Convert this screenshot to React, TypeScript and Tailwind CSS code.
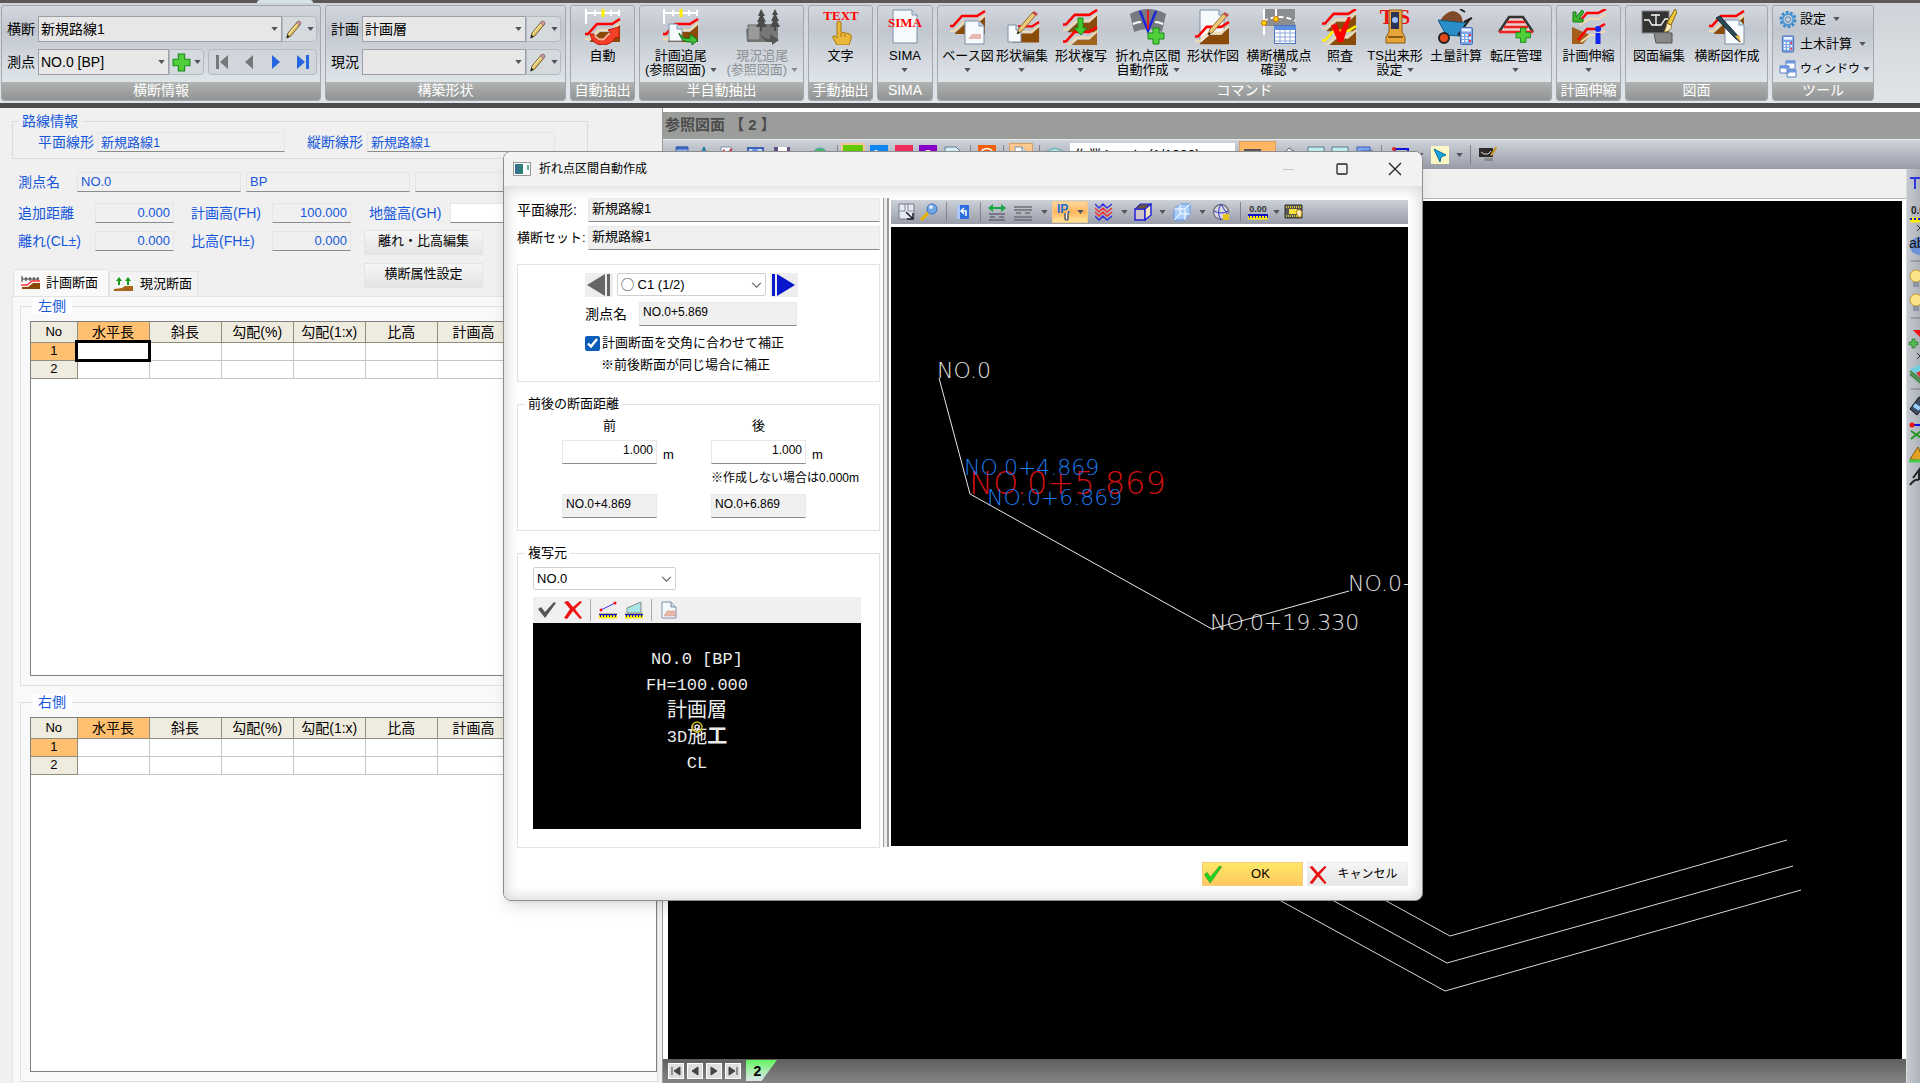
import React, { useState } from 'react';

/* ---------- small drawing parts ---------- */

const Caret = ({ dim = false }: { dim?: boolean }) => (
    <svg viewBox="0 0 8 5" className="h-[4px] w-[7px] shrink-0">
        <path d="M0 0h8L4 5z" fill={dim ? '#8a8e94' : '#50555c'} />
    </svg>
);

const Chevron = () => (
    <svg viewBox="0 0 12 8" className="h-[7px] w-[11px]" fill="none" stroke="#666" strokeWidth="1.3">
        <path d="M1 1l5 5 5-5" />
    </svg>
);

const Pencil = () => (
    <svg viewBox="0 0 18 20" className="h-[19px] w-[17px]">
        <path d="M2 19l1-5L13 2l3 3L6 17z" fill="#e3c368" stroke="#6b5427" strokeWidth="1" />
        <path d="M12 3l2-2q3 0 3 3l-2 2z" fill="#c79aa0" stroke="#7a4d4d" strokeWidth=".7" />
        <path d="M4 14.500L13 4" stroke="#fbe9a8" strokeWidth="1.200" />
        <path d="M1.500 19.500l1-4 2.500 2z" fill="#222" />
    </svg>
);

// cut section of a road: red design line over brown soil
const Section = ({ x = 0, y = 0, w = 36, line = '#f00', soil = '#8a4a08' }: any) => (
    <g transform={`translate(${x} ${y}) scale(${w / 36})`}>
        <path d="M5 22l10-9h12l8-7v17H5z" fill={soil} />
        <path d="M0 20h4l10-9h13l8-7" fill="none" stroke="#f0dcae" strokeWidth="2" />
        <path d="M0 15h3l9-10h15l8-5" fill="none" stroke={line} strokeWidth="2.600" />
    </g>
);

const Page = ({ x = 0, y = 0, w = 16, h = 20 }: any) => (
    <g transform={`translate(${x} ${y})`}>
        <path d={`M0 0h${w - 5}l5 5v${h - 5}h${-w}z`} fill="#f7fafd" stroke="#7d8fa8" />
        <path d={`M${w - 5} 0v5h5`} fill="#cfdcec" stroke="#7d8fa8" />
    </g>
);

const Ruler = () => (
    <g stroke="#fff" strokeWidth="2" fill="none">
        <path d="M1 0v15M1 4h34M10 1v6M26 1v6M34 1v6" />
        <path d="M18 0v8" stroke="#fe0" strokeWidth="3" />
    </g>
);

const Pen = ({ x = 0, y = 0 }: any) => (
    <g transform={`translate(${x} ${y})`}>
        <path d="M1 22l2-6L17 0l3 3L6 19z" fill="#ecc777" stroke="#775520" strokeWidth=".8" />
        <path d="M16 1l2-2 4 3-2 2z" fill="#c54a4a" />
        <path d="M1 22l1-3 2 2z" fill="#222" />
    </g>
);

const Plus = ({ x = 0, y = 0, s = 1 }: any) => (
    <path transform={`translate(${x} ${y}) scale(${s})`} d="M5 0h6v5h5v6h-5v5H5v-5H0V5h5z" fill="#4fcf3a" stroke="#168a18" />
);

const Calc = ({ x = 0, y = 0 }: any) => (
    <g transform={`translate(${x} ${y})`}>
        <rect x=".5" y=".5" width="12" height="17" rx="1" fill="#7ba4e8" stroke="#4b6fb5" />
        <path d="M2 3h9" stroke="#e8f2ff" strokeWidth="3" />
        <path d="M2 8h9M2 11h9M2 14h9" stroke="#fff" strokeWidth="2" strokeDasharray="2 1.500" />
        <path d="M9 8h2M9 14h2" stroke="#e33" strokeWidth="2" />
    </g>
);

const Big = ({ children }: { children?: React.ReactNode }) => (
    <svg viewBox="0 0 36 36" className="h-9 w-9 shrink-0">{children}</svg>
);

const icons: Record<string, React.ReactNode> = {
    auto: (
        <Big>
            <Section y={10} w={36} />
            <Ruler />
            <path d="M5 25q2 11 13 11 9-1 13-8l3 1V18l-11 3 3 3q-4 7-11 7-7-1-6-6z" fill="#f5402a" stroke="#c01808" />
            <path d="M10 27q4 5 9 3l6-6" stroke="#ffb09a" strokeWidth="2" fill="none" />
        </Big>
    ),
    follow: (
        <Big>
            <Section y={10} />
            <Ruler />
            <Page x={6} y={15} w={13} h={17} />
            <path d="M16 24q4 7 11 5v-4l8 6-6 5v-3q-11 1-13-9z" fill="#3fc13a" stroke="#0f6f16" />
        </Big>
    ),
    followOff: (
        <Big>
            <path d="M2 20h9l3-5h20v15l-8 3H3z" fill="#777" />
            <path d="M4 16h12v15H4z" fill="#9b9b9b" stroke="#666" />
            <path d="M17 0l4 7h-2l3 6h-2l3 5h-5v4h-2v-4h-4l3-5h-2l3-6h-2zM31 0l3 6h-2l3 6h-2l3 6h-4v4h-2v-4h-4l3-6h-2l3-6h-2z" fill="#4b4b4b" />
            <path d="M17 25q4 6 9 5v-5l9 6-7 5v-3q-9 1-11-8z" fill="#555" />
        </Big>
    ),
    text: (
        <Big>
            <text x="18" y="11" textAnchor="middle" fontSize="13" fontWeight="bold" fill="#f00" className="font-['Liberation_Serif']">TEXT</text>
            <path d="M14 13q2-2 4 0v10l9 2q2 1 1 5l-2 6H14l-4-7q-1-3 2-2l2 2z" fill="#e9b73a" stroke="#a87913" />
            <path d="M18 24v4M22 25v3" stroke="#a87913" />
        </Big>
    ),
    sima: (
        <Big>
            <Page x={6} y={1} w={24} h={33} />
            <text x="18" y="18" textAnchor="middle" fontSize="13" fontWeight="bold" fill="#f00" className="font-['Liberation_Serif']">SIMA</text>
        </Big>
    ),
    base: (
        <Big>
            <Section y={2} />
            <Page x={15} y={12} w={19} h={23} />
            <path d="M18 30l4-5h9v5z" fill="#e8b9b0" />
        </Big>
    ),
    edit: (
        <Big>
            <Section x={4} y={13} w={32} />
            <Page x={4} y={16} w={13} h={17} />
            <Pen x={12} y={3} />
        </Big>
    ),
    copy: (
        <Big>
            <Section y={1} w={35} />
            <Section y={18} w={35} soil="#a0621c" />
            <path d="M15 9h5v10h4l-6 7-7-7h4z" fill="#46c832" stroke="#1a8a16" />
        </Big>
    ),
    bend: (
        <Big>
            <path d="M0 5q18-10 36 0l-4 18q-14-6-28 0z" fill="#777b81" />
            <path d="M3 15q4-2 8-2M33 15q-4-2-8-2" stroke="#fff" strokeWidth="2" />
            <path d="M10 2l8 20 8-20" fill="none" stroke="#1a23d8" strokeWidth="2.500" />
            <path d="M18 1v19" stroke="#e02020" strokeWidth="2" />
            <Plus x={18} y={19} />
        </Big>
    ),
    draw: (
        <Big>
            <Page x={5} y={1} w={24} h={33} />
            <Section y={13} w={35} />
            <Pen x={12} y={4} />
        </Big>
    ),
    check: (
        <Big>
            <path d="M2 0h32v17H2z" fill="#8b8d8e" />
            <path d="M2 12q18-8 32 0" stroke="#fff" fill="none" strokeDasharray="5 3" strokeWidth="2" />
            <path d="M3 0v26M15 0v12" stroke="#fff" strokeWidth="2" />
            <circle cx="3" cy="14" r="2.500" fill="#fd0" stroke="#d60" />
            <circle cx="15" cy="10" r="2.500" fill="#fd0" stroke="#d60" />
            <rect x="13.500" y="16.500" width="21" height="18" fill="#fff" stroke="#4a73bb" />
            <path d="M13 19h22" stroke="#5f8fe0" strokeWidth="4" />
            <path d="M14 24h20M14 28h20M14 32h20M19 21v14M24 21v14M29 21v14" stroke="#8faadb" />
        </Big>
    ),
    verify: (
        <Big>
            <Section y={0} w={35} />
            <Section y={17} w={35} line="#fe0" />
            <path d="M9 16l6-1 3 8L26 8l3 0-8 25h-5z" fill="#f00" />
        </Big>
    ),
    ts: (
        <Big>
            <text x="18" y="15" textAnchor="middle" fontSize="21" fontWeight="bold" fill="#e11" className="font-['Liberation_Serif']">T S</text>
            <path d="M12 1h13v22l3 5v6H9v-6l3-5z" fill="#e6a43a" stroke="#8a5a12" />
            <path d="M14 3h8v17h-8z" fill="#2a3358" />
            <circle cx="18" cy="11" r="3" fill="#9fc0ff" />
            <path d="M11 28h15" stroke="#8a5a12" strokeWidth="2" />
        </Big>
    ),
    barrow: (
        <Big>
            <path d="M2 12q5-9 13-10 9 1 10 12z" fill="#80492a" />
            <path d="M0 11l28 3-7 13-13-1z" fill="#2a8fc8" stroke="#125a86" />
            <path d="M26 13l8-4M27 3l-5-3M22 26l3 7M20 26L32 10" stroke="#222" strokeWidth="2" fill="none" />
            <circle cx="6" cy="29" r="5" fill="#e4491c" stroke="#222" strokeWidth="2" />
            <Calc x={22} y={18} />
        </Big>
    ),
    roll: (
        <Big>
            <path d="M11 8h14l10 15H1z" fill="#e8cdcb" />
            <path d="M1 23L11 8h14l10 15" fill="none" stroke="#333" strokeWidth="2.500" />
            <path d="M9 13h18M6 18h24M1 23h34" stroke="#e22" strokeWidth="2.500" />
            <Plus x={18} y={19} s={0.9} />
        </Big>
    ),
    stretch: (
        <Big>
            <path d="M1 18l18 8-7 9H1z" fill="#a35f1a" />
            <path d="M9 16l9-6h9l8-5M10 33l9-7h6l9-4" stroke="#f0dcae" strokeWidth="2" fill="none" />
            <path d="M9 12l7-8h11l8-4M7 31l9-11h9l9-5" stroke="#f00" strokeWidth="2.500" fill="none" />
            <path d="M11 1L5 8V3H2v10h10v-3H8l5-7z" fill="#3bb72f" stroke="#167a14" />
            <path d="M27 24v11" stroke="#1125f0" strokeWidth="5" />
            <circle cx="27" cy="20" r="3" fill="#1125f0" />
        </Big>
    ),
    figure: (
        <Big>
            <path d="M13 24h18v10H15z" fill="#888" stroke="#555" />
            <rect x="1" y="2" width="27" height="22" fill="#333" stroke="#8a8a8a" />
            <path d="M3 11h5l3 5h9l4-6h3M15 6v10M10 6h9" stroke="#fff" fill="none" strokeWidth="1.300" />
            <path d="M34 0l2 3-6 13-4-2z" fill="#edc93c" stroke="#8a6712" />
            <path d="M26 14l5 3q-2 6-8 6 2-3 3-9z" fill="#fdeec0" stroke="#97762a" />
        </Big>
    ),
    xdraw: (
        <Big>
            <Section y={2} />
            <Page x={16} y={11} w={19} h={24} />
            <path d="M7 9l4-2 18 20 2 6-5-4z" fill="#2b4a58" stroke="#10222b" />
            <path d="M26 27l6 7-2-8z" fill="#e3b74a" />
        </Big>
    ),
};

/* ---------- ribbon ---------- */

const Group = ({ title, className, children }: { title: string; className: string; children?: React.ReactNode }) => (
    <section className={`flex h-[96px] shrink-0 flex-col overflow-hidden rounded-[3px] border border-[#a3a8ae] bg-linear-to-b from-[#d3d7de] via-[#c2c7cf] via-25% to-[#e9f0f2] ${className}`}>
        <div className="flex min-h-0 flex-1">{children}</div>
        <h2 className="h-[18px] bg-linear-to-b from-[#b1b3b2] to-[#929493] text-center text-sm leading-[17px] text-white">{title}</h2>
    </section>
);

const BigButton = ({ icon, lines, caret, off, className }: { icon: string; lines: string[]; caret?: boolean; off?: boolean; className: string }) => (
    <button type="button" disabled={off} className={`flex shrink-0 flex-col items-center pt-[3px] ${className} ${off ? 'text-[#8b8f94]' : 'text-black'}`}>
        {icons[icon]}
        <span className="mt-1 flex flex-col items-center text-[13px] leading-[14px] whitespace-nowrap">
            <span>{lines[0]}</span>
            <span className="flex h-[14px] items-center gap-1">{lines[1]}{caret && <Caret dim={off} />}</span>
        </span>
    </button>
);

const RibbonSelect = ({ label, value, className }: { label: string; value: string; className: string }) => (
    <label className="flex items-center text-sm">
        <span className="w-[31px]">{label}</span>
        <span className={`relative block ${className}`}>
            <select className="h-[26px] w-full appearance-none border border-[#9da0a4] bg-[#e7e7e7] pl-[2px] text-sm" defaultValue={value}>
                <option>{value}</option>
            </select>
            <span className="pointer-events-none absolute top-[11px] right-1"><Caret /></span>
        </span>
    </label>
);

const SmallSplit = ({ children, label }: { children?: React.ReactNode; label: string }) => (
    <button type="button" aria-label={label} className="flex h-[26px] w-[35px] items-center justify-between rounded-r-sm border border-[#b4bac0] bg-[#d4dade] px-[2px]">
        {children}
        <Caret />
    </button>
);

const commands: [string, string[], boolean, string][] = [
    ['base', ['ベース図'], true, 'w-[52px]'],
    ['edit', ['形状編集'], true, 'w-[56px]'],
    ['copy', ['形状複写'], true, 'w-[62px]'],
    ['bend', ['折れ点区間', '自動作成'], true, 'w-[72px]'],
    ['draw', ['形状作図'], false, 'w-[58px]'],
    ['check', ['横断構成点', '確認'], true, 'w-[74px]'],
    ['verify', ['照査'], true, 'w-[48px]'],
    ['ts', ['TS出来形', '設定'], true, 'w-[62px]'],
    ['barrow', ['土量計算'], false, 'w-[60px]'],
    ['roll', ['転圧管理'], true, 'w-[60px]'],
];

const Ribbon = () => (
    <header className="h-[108px] shrink-0 border-b-[5px] border-[#4b4b4d] bg-linear-to-b from-[#cfd3d9] to-[#dfe5e8]">
        <div className="h-[3px] bg-[#5c5859]">
            <div className="ml-[257px] h-[3px] w-[56px] rounded-t-full bg-[#d5e2e6]"></div>
        </div>
        <div className="flex gap-1 pt-[2px] pl-px">
            <Group title="横断情報" className="w-[320px]">
                <div className="flex flex-col gap-[7px] pt-[10px] pl-[5px]">
                    <div className="flex">
                        <RibbonSelect label="横断" value="新規路線1" className="w-[244px]" />
                        <SmallSplit label="横断編集"><Pencil /></SmallSplit>
                    </div>
                    <div className="flex">
                        <RibbonSelect label="測点" value="NO.0 [BP]" className="w-[131px]" />
                        <SmallSplit label="測点追加">
                            <svg viewBox="-1 -1 18 18" className="h-[19px] w-[19px]"><Plus /></svg>
                        </SmallSplit>
                        <div className="ml-1 flex h-[26px] w-[109px] items-center justify-around rounded-sm border border-[#b4bac0] bg-[#d0d6db]">
                            <button type="button" aria-label="先頭"><svg viewBox="0 0 14 14" className="h-[14px] w-[14px]" fill="#75777b"><path d="M1 0h3v14H1zM13 0v14L5 7z" /></svg></button>
                            <button type="button" aria-label="前へ"><svg viewBox="0 0 14 14" className="h-[14px] w-[14px]" fill="#75777b"><path d="M11 0v14L3 7z" /></svg></button>
                            <button type="button" aria-label="次へ"><svg viewBox="0 0 14 14" className="h-[14px] w-[14px]" fill="#2566e0"><path d="M3 0v14l8-7z" /></svg></button>
                            <button type="button" aria-label="最後"><svg viewBox="0 0 14 14" className="h-[14px] w-[14px]" fill="#2566e0"><path d="M10 0h3v14h-3zM1 0v14l8-7z" /></svg></button>
                        </div>
                    </div>
                </div>
            </Group>
            <Group title="構築形状" className="w-[241px]">
                <div className="flex flex-col gap-[7px] pt-[10px] pl-[5px]">
                    <div className="flex">
                        <RibbonSelect label="計画" value="計画層" className="w-[164px]" />
                        <SmallSplit label="計画編集"><Pencil /></SmallSplit>
                    </div>
                    <div className="flex">
                        <RibbonSelect label="現況" value="" className="w-[164px]" />
                        <SmallSplit label="現況編集"><Pencil /></SmallSplit>
                    </div>
                </div>
            </Group>
            <Group title="自動抽出" className="w-[65px]">
                <BigButton icon="auto" lines={['自動']} className="w-full" />
            </Group>
            <Group title="半自動抽出" className="w-[165px]">
                <BigButton icon="follow" lines={['計画追尾', '(参照図面)']} caret className="w-1/2" />
                <BigButton icon="followOff" lines={['現況追尾', '(参照図面)']} caret off className="w-1/2" />
            </Group>
            <Group title="手動抽出" className="w-[65px]">
                <BigButton icon="text" lines={['文字']} className="w-full" />
            </Group>
            <Group title="SIMA" className="w-[56px]">
                <BigButton icon="sima" lines={['SIMA']} caret className="w-full" />
            </Group>
            <Group title="コマンド" className="w-[615px]">
                <div className="flex pl-1">
                    {commands.map(([icon, lines, caret, w]) => (
                        <BigButton key={icon} icon={icon} lines={lines} caret={caret} className={w} />
                    ))}
                </div>
            </Group>
            <Group title="計画伸縮" className="w-[65px]">
                <BigButton icon="stretch" lines={['計画伸縮']} caret className="w-full" />
            </Group>
            <Group title="図面" className="w-[143px]">
                <BigButton icon="figure" lines={['図面編集']} className="w-[66px]" />
                <BigButton icon="xdraw" lines={['横断図作成']} className="w-[70px]" />
            </Group>
            <Group title="ツール" className="w-[102px]">
                <div className="flex flex-col gap-[5px] pt-[3px] pl-[6px] text-[13px] leading-5 whitespace-nowrap">
                    <button type="button" className="flex items-center gap-[3px]">
                        <svg viewBox="0 0 20 20" className="h-[19px] w-[18px] shrink-0" fill="none">
                            <circle cx="10" cy="10" r="8" stroke="#3c86c8" strokeWidth="3" strokeDasharray="3 2" />
                            <circle cx="10" cy="10" r="6" stroke="#4a97d8" strokeWidth="2" />
                            <circle cx="10" cy="10" r="3" stroke="#3c86c8" />
                        </svg>
                        設定<span className="pl-1"><Caret /></span>
                    </button>
                    <button type="button" className="flex items-center gap-[3px]">
                        <svg viewBox="-3 0 19 18" className="h-[18px] w-[18px] shrink-0"><Calc /></svg>
                        土木計算<span className="pl-1"><Caret /></span>
                    </button>
                    <button type="button" className="flex items-center gap-[3px] text-xs leading-5">
                        <svg viewBox="0 0 18 18" className="h-[18px] w-[18px] shrink-0" fill="#fff" stroke="#5b7fc0">
                            <path d="M7 1h9v8H7zM1 6h9v7H1zM8 10h9v7H8z" />
                            <path d="M7 2h9M1 7h9M8 11h9" strokeWidth="3" stroke="#6d98e0" />
                        </svg>
                        ウィンドウ<Caret />
                    </button>
                </div>
            </Group>
        </div>
    </header>
);

/* ---------- left input panel ---------- */

const Field = ({ label, value, labelClass, inputClass, right, white }: any) => (
    <label className="flex items-center">
        {label && <span className={`shrink-0 leading-[18px] whitespace-nowrap ${labelClass}`}>{label}</span>}
        <input
            readOnly={!white}
            aria-label={label ? undefined : '測点'}
            defaultValue={value}
            className={`h-5 border border-[#e6e6e6] border-b-[#8c8c8c] px-[3px] pb-[2px] text-[13px] outline-none ${right ? 'text-right' : ''} ${white ? 'bg-white' : 'bg-[#f0f0f0]'} ${inputClass}`}
        />
    </label>
);

const columns = ['水平長', '斜長', '勾配(%)', '勾配(1:x)', '比高', '計画高'];

const SideTable = ({ title, active }: { title: string; active?: boolean }) => (
    <fieldset className="flex min-h-0 min-w-0 flex-1 flex-col border border-[#dfdfdf] pb-[9px] pl-[9px]">
        <legend className="ml-[2px] bg-white px-[6px] text-sm leading-4 text-[#1557dc]">{title}</legend>
        <div className="mt-[7px] min-h-0 flex-1 overflow-hidden border border-[#808080] bg-white">
            <table className="w-[479px] table-fixed border-collapse text-center text-sm leading-4">
                <thead>
                    <tr className="h-5">
                        <th className="w-[46px] border-r border-b border-[#8f8d7c] bg-[#efebde] text-[13px] font-normal">No</th>
                        {columns.map((c, i) => (
                            <th key={c} className={`border-r border-b border-[#8f8d7c] font-normal whitespace-nowrap ${i === 0 ? 'bg-[#ffc072]' : 'bg-[#efebde]'}`}>{c}</th>
                        ))}
                    </tr>
                </thead>
                <tbody>
                    {[1, 2].map((n) => (
                        <tr key={n} className="h-[18px]">
                            <th className={`border-r border-b border-[#8f8d7c] text-[13px] font-normal ${n === 1 ? 'bg-[#ffc072]' : 'bg-[#efebde]'}`}>{n}</th>
                            {columns.map((c, i) => (
                                <td key={c} className={`border-r border-b border-[#c6c6c6] ${active && n === 1 && i === 0 ? 'outline-3 -outline-offset-1 outline-black' : ''}`}></td>
                            ))}
                        </tr>
                    ))}
                </tbody>
            </table>
        </div>
    </fieldset>
);

const InputPanel = () => (
    <aside className="flex w-[662px] shrink-0 flex-col bg-[#f0f0f0] pt-[5px] text-sm text-[#1557dc]">
        <fieldset className="ml-3 h-[46px] w-[576px] border border-[#dcdcdc]">
            <legend className="ml-[5px] px-1 leading-4">路線情報</legend>
            <div className="flex gap-[22px] pt-[3px] pl-[25px]">
                <Field label="平面線形" value="新規路線1" labelClass="w-[59px]" inputClass="w-[188px]" />
                <Field label="縦断線形" value="新規路線1" labelClass="w-[60px]" inputClass="w-[188px]" />
            </div>
        </fieldset>
        <div className="mt-[13px] flex gap-[5px] pl-[18px]">
            <Field label="測点名" value="NO.0" labelClass="w-[59px]" inputClass="w-[164px]" />
            <Field value="BP" inputClass="w-[164px]" />
            <Field value="" inputClass="w-[164px]" />
        </div>
        <div className="mt-[11px] flex h-[93px] shrink-0 pl-[13px]">
            <div className="flex w-[351px] flex-col">
                <div className="flex gap-[17px] pl-[5px]">
                    <Field label="追加距離" value="0.000" right labelClass="w-[77px]" inputClass="w-[79px]" />
                    <Field label="計画高(FH)" value="100.000" right labelClass="w-[81px]" inputClass="w-[79px]" />
                </div>
                <div className="mt-2 flex gap-[17px] pl-[5px]">
                    <Field label="離れ(CL±)" value="0.000" right labelClass="w-[77px]" inputClass="w-[79px]" />
                    <Field label="比高(FH±)" value="0.000" right labelClass="w-[81px]" inputClass="w-[79px]" />
                </div>
                <div className="mt-auto flex items-end text-black" role="tablist">
                    <button type="button" role="tab" aria-selected="true" className="flex h-[27px] w-[96px] items-center gap-[5px] border border-b-0 border-[#e4e4e4] bg-[#f9f9f9] pl-[7px] text-[13px] whitespace-nowrap">
                        <svg viewBox="0 0 20 14" className="h-[14px] w-5 shrink-0">
                            <path d="M1 0v6M1 3h17M5 1v4M9 1v4M13 1v4M17 1v4" stroke="#333" />
                            <path d="M1 11h6l5-4h7v6H1z" fill="#8a4a08" />
                            <path d="M0 9h6l5-4h8" stroke="#f33" strokeWidth="1.500" fill="none" />
                        </svg>
                        計画断面
                    </button>
                    <button type="button" role="tab" aria-selected="false" className="flex h-[25px] w-[89px] items-center gap-[6px] border border-b-0 border-[#e4e4e4] bg-[#f3f3f3] pl-1 text-[13px] whitespace-nowrap">
                        <svg viewBox="0 0 20 14" className="h-[14px] w-5 shrink-0">
                            <path d="M5 0l3 4H6v4H4V4H2zM14 0l3 4h-2v4h-2V4h-2z" fill="#1a9a1a" />
                            <path d="M0 12l8-1 3-2h8v5H0z" fill="#a8661c" />
                        </svg>
                        現況断面
                    </button>
                </div>
            </div>
            <div className="flex flex-col">
                <div className="pl-[5px]">
                    <Field label="地盤高(GH)" value="" white labelClass="w-[81px]" inputClass="w-[79px]" />
                </div>
                <button type="button" className="mt-[7px] h-[25px] w-[119px] border border-[#e4e4e4] bg-linear-to-b from-[#f6f6f6] to-[#e4e4e4] pb-[2px] text-[13px] whitespace-nowrap text-black">離れ・比高編集</button>
                <button type="button" className="mt-2 h-[25px] w-[119px] border border-[#e4e4e4] bg-linear-to-b from-[#f6f6f6] to-[#e4e4e4] pb-[2px] text-[13px] text-black">横断属性設定</button>
            </div>
        </div>
        <div className="mr-1 ml-3 flex min-h-0 flex-1 flex-col gap-2 border-t border-l border-[#e4e4e4] bg-[#f9f9f9] pt-px pb-px pl-[7px] text-black">
            <SideTable title="左側" active />
            <SideTable title="右側" />
        </div>
    </aside>
);

/* ---------- reference drawing pane ---------- */

const Cell = ({ w, children }: { w: string; children?: React.ReactNode }) => (
    <span className={`flex h-full shrink-0 items-center justify-center ${w}`}>{children}</span>
);

const Sep = () => <span className="h-5 w-px bg-[#7f848d]"></span>;

const Mini = ({ children }: { children?: React.ReactNode }) => (
    <svg viewBox="0 0 18 18" className="h-[18px] w-[18px] shrink-0">{children}</svg>
);

const DrawingToolbar = () => (
    <div className="flex h-[30px] shrink-0 items-center border-t border-[#e8e8e8] bg-linear-to-b from-[#cfd3da] to-[#979ca8] pl-1">
        <Cell w="w-[26px]"><Mini><path d="M5 1h12v12H5z" fill="#8db4f5" stroke="#3f63b5" /><path d="M5 2h12" stroke="#3f63b5" strokeWidth="3" /></Mini></Cell>
        <Cell w="w-[22px]"><Mini><path d="M2 16L9 1l6 15z" fill="#27a5d8" stroke="#15668c" /></Mini></Cell>
        <Cell w="w-[28px]"><Mini><Page x={1} y={1} w={15} h={15} /><path d="M3 4l8 8M12 3l-8 8" stroke="#c33" strokeWidth="2" /></Mini></Cell>
        <Cell w="w-[24px]"><Mini><path d="M2 2h15v12H2z" fill="#c5dafc" stroke="#3f63b5" strokeWidth="2" /><circle cx="9" cy="7" r="4" fill="#5e90e6" /></Mini></Cell>
        <Cell w="w-[30px]"><Mini><path d="M1 1h16v14H1z" fill="#655086" /><path d="M5 1h9v6H5z" fill="#fff" /></Mini></Cell>
        <Cell w="w-[10px]"></Cell>
        <Cell w="w-[26px]"><Mini><circle cx="9" cy="9" r="7" fill="#4ab86b" stroke="#5b9fc0" /></Mini></Cell>
        <Cell w="w-[8px]"><Sep /></Cell>
        <Cell w="w-[24px]"><span className="h-6 w-6 border-2 border-[#f5c596] bg-[#62c800]"></span></Cell>
        <Cell w="w-[28px]"><span className="h-5 w-[18px] bg-[#1086f2] text-center text-xs leading-5 font-bold text-white">fg</span></Cell>
        <Cell w="w-[22px]"><span className="h-5 w-[18px] bg-[#f02c5c] text-center text-xs leading-5 text-white">⋈</span></Cell>
        <Cell w="w-[26px]"><span className="h-5 w-[18px] bg-[#8800c8] text-center text-xs leading-5 font-bold text-white">O</span></Cell>
        <Cell w="w-[24px]"><Mini><path d="M1 1h11l5 5v9H1z" fill="#d4ecf4" stroke="#607890" /></Mini></Cell>
        <Cell w="w-[10px]"><Sep /></Cell>
        <Cell w="w-[24px]"><span className="h-5 w-[18px] bg-[#f45f0a] text-center text-xs leading-5 font-bold text-white">⌒</span></Cell>
        <Cell w="w-[8px]"><Sep /></Cell>
        <Cell w="w-[28px]"><span className="flex h-6 w-6 items-center justify-center border border-[#d99f60] bg-[#ffc98e]"><Mini><Page x={3} y={1} w={12} h={15} /></Mini></span></Cell>
        <Cell w="w-[8px]"><Sep /></Cell>
        <Cell w="w-[24px]"><Mini><path d="M1 5l8-3 8 3-8 4z" fill="#a8e2e8" stroke="#5aa" /><path d="M1 9l8 4 8-4" stroke="#5aa" fill="none" /></Mini></Cell>
        <select aria-label="シート" className="ml-[3px] h-6 w-[165px] appearance-none bg-white px-1 text-sm" defaultValue="s">
            <option value="s">作業シート (1/1000)</option>
        </select>
        <Cell w="ml-1 w-[37px]"><span className="flex h-7 w-full items-center gap-1 border border-[#d99f60] bg-[#ffb663] pl-1"><Mini><path d="M1 4h15v11H1z" fill="#ffefb0" stroke="#555" strokeWidth="2" /></Mini><Caret /></span></Cell>
        <Cell w="w-[27px]"><Mini><path d="M1 9l7-7 9 6-7 8z" fill="#e8ecf0" stroke="#667" /></Mini></Cell>
        <Cell w="w-[25px]"><Mini><path d="M1 1h16v14H1z" fill="#b9ecea" stroke="#678" /></Mini></Cell>
        <Cell w="w-[24px]"><Mini><path d="M1 1h16v14H1z" fill="#b9ecea" stroke="#678" /><path d="M9 6h8v9H9z" fill="#fff" /></Mini></Cell>
        <Cell w="w-[25px]"><Mini><path d="M1 1h13v9H1zM5 5h12v9H5z" fill="#7da4ee" stroke="#3b5dac" /></Mini></Cell>
        <Cell w="w-[8px]"><Sep /></Cell>
        <Cell w="w-[30px]"><Mini><path d="M4 14V3h13v11" fill="none" stroke="#11d" strokeWidth="2" /><circle cx="3" cy="3" r="2" fill="#d22" /></Mini></Cell>
        <Cell w="w-[10px]"><Caret /></Cell>
        <Cell w="w-[29px]"><span className="h-[18px] w-[18px] bg-[#fbf7c4]"><Mini><path d="M3 3l12 6-5 2-1 5z" fill="#18a4dc" stroke="#0e6f99" /></Mini></span></Cell>
        <Cell w="w-[10px]"><Caret /></Cell>
        <Cell w="w-[12px]"><Sep /></Cell>
        <Cell w="w-[24px]">
            <Mini>
                <path d="M0 2h14v9H0z" fill="#2c2a27" /><path d="M2 6l3 2h4l3-3" stroke="#ddd" fill="none" />
                <path d="M17 0l1 2-5 8-2-1z" fill="#c9962c" /><path d="M5 12h9v3H6z" fill="#888" />
            </Mini>
        </Cell>
    </div>
);

const SideStrip = () => (
    <div className="w-[14px] shrink-0 overflow-hidden border-l border-[#d8dade] bg-linear-to-r from-[#c6c9cf] to-[#aeb3bb]">
        <svg width="36" height="330" viewBox="0 0 36 330">
            <path d="M3 9h14M8 9v11" stroke="#2b35e0" strokeWidth="2" fill="none" />
            <text x="4" y="45" fontSize="10" fontWeight="bold" fill="#222">0.00</text>
            <path d="M3 51h18" stroke="#fe0" strokeWidth="5" /><path d="M3 50h18" stroke="#11c" strokeWidth="2" strokeDasharray="2 2" />
            <circle cx="12" cy="77" r="9" fill="#6b93d8" /><text x="2" y="79" fontSize="14" fill="#111">ab</text>
            <path d="M4 92h14M4 149h14M4 220h14" stroke="#777b82" />
            {[102, 126].map((y) => (
                <g key={y}>
                    <circle cx="9" cy={y + 5} r="6" fill="#fbe38a" stroke="#c29a2a" />
                    <path d="M6 11h6v5H6z" transform={`translate(0 ${y})`} fill="#8a93a0" />
                </g>
            ))}
            <path d="M10 56l3 3-3 3M10 184l3 3-3 3" stroke="#333" fill="none" />
            <path d="M6 161h14v14z" fill="#e11" /><path d="M5 170h3v3h3v3H8v3H5v-3H2v-3h3z" fill="#5b5" stroke="#272" strokeWidth=".7" />
            <path d="M3 200l12-5v16z" fill="#6fd0e0" /><path d="M3 202l12 10M3 205l12 10" stroke="#484" strokeWidth="2" /><path d="M9 204l6-3v10z" fill="#d33" />
            <path d="M3 240l9-12 8 5-10 13z" fill="#3c4c66" stroke="#111" /><path d="M7 236l6 4" stroke="#9cf" strokeWidth="4" />
            <path d="M5 256h14" stroke="#11d" strokeWidth="2" /><circle cx="5" cy="256" r="2.500" fill="#e11" /><path d="M4 262l12 8M4 270l10-8" stroke="#292" strokeWidth="2" />
            <path d="M3 290l8-12 6 14z" fill="#e0a020" stroke="#8a5a10" /><path d="M2 292h12" stroke="#4c4" strokeWidth="3" />
            <path d="M3 316q4-6 9-5M6 309l6-8v10" stroke="#222" strokeWidth="2" fill="none" />
        </svg>
    </div>
);

const DrawingPane = () => (
    <main className="flex min-w-0 flex-1 flex-col border-l border-[#9b9b9b] bg-white pt-1">
        <h2 className="h-[27px] shrink-0 bg-[#9b9d9b] pl-[2px] text-[15px] leading-[26px] font-bold text-[#4c4c4c]">参照図面 【 2 】</h2>
        <DrawingToolbar />
        <div className="flex min-h-0 flex-1">
            <div className="flex min-w-0 flex-1 flex-col">
                <div className="h-[30px] shrink-0 border-b border-[#b5b5b5] bg-[#f0f0f0]"></div>
                <div className="mt-[2px] mr-1 ml-[5px] min-h-0 flex-1 bg-black">
                    <svg width="100%" height="100%" fill="none" stroke="#d8d8d8" strokeWidth="1">
                        <path d="M500 580l282 155 337-96M500 609l279 153 346-97M500 638l277 152 356-101" />
                    </svg>
                </div>
                <div className="flex h-6 shrink-0 items-start gap-[3px] bg-linear-to-b from-[#5f5f5f] to-[#858585] pt-[3px] pl-[5px]">
                    {['M3 3v8M11 3v8L5 7z', 'M10 3v8L4 7z', 'M4 3v8l6-4z', 'M11 3v8M3 3v8l6-4z'].map((d, i) => (
                        <button key={d} type="button" aria-label={`シート移動${i + 1}`} className="mt-px h-4 w-4 border border-[#fdfdfd] bg-[#dedede]">
                            <svg viewBox="0 0 14 14" className="h-[14px] w-[14px]" fill="#444" stroke="#444"><path d={d} /></svg>
                        </button>
                    ))}
                    <button type="button" className="-mt-[2px] ml-[2px] h-[21px] w-[31px] bg-linear-to-b from-[#5df25a] to-[#dce4ea] pr-2 text-sm font-bold text-black [clip-path:polygon(0_0,100%_0,50%_100%,0_100%)]">2</button>
                </div>
            </div>
            <SideStrip />
        </div>
    </main>
);

/* ---------- dialog ---------- */

const BoxSelect = ({ value, label, className }: { value: string; label: string; className: string }) => (
    <span className={`relative block ${className}`}>
        <select aria-label={label} defaultValue={value} className="h-[23px] w-full appearance-none rounded-[2px] border border-[#d0d0d0] bg-white pl-[3px] text-[13px] leading-5">
            <option>{value}</option>
        </select>
        <span className="pointer-events-none absolute top-[9px] right-1"><Chevron /></span>
    </span>
);

const field = 'h-6 border border-[#e8e8e8] border-b-[#8c8c8c] px-[3px] pb-[5px] outline-none';

const ViewToolbar = () => (
    <div className="flex h-6 items-center gap-1 bg-linear-to-b from-[#cdd1d8] to-[#989dA9] pl-[7px]">
        <Mini><path d="M1 1h15v15H1z" fill="#e4ebf4" stroke="#778" /><path d="M7 1v7H1M10 1v7h6" stroke="#889" fill="none" /><path d="M15 10v6H9M15 16L8 9" stroke="#222" strokeWidth="1.500" fill="none" /></Mini>
        <Mini><path d="M1 17l7-7" stroke="#e9b400" strokeWidth="3" /><circle cx="12" cy="6" r="5" fill="#6fa6e6" stroke="#3c6db5" /><circle cx="11" cy="4" r="2" fill="#d8eaff" /></Mini>
        <Cell w="w-2"><Sep /></Cell>
        <Mini><path d="M3 2h12v14H3z" fill="#2d6fe0" /><path d="M6 2v14H3V2z" fill="#a9c8fa" /><path d="M12 13V8H8M10 5L7 8l3 3" stroke="#fff" strokeWidth="1.500" fill="none" /></Mini>
        <Cell w="w-2"><Sep /></Cell>
        <Mini><path d="M0 5l5-4v3h8V1l5 4-5 4V6H5v3z" fill="#18a848" /><path d="M1 11h16M1 17h16M2 14h5M11 14h5" stroke="#667" strokeWidth="1.500" /></Mini>
        <Cell w="w-[26px]"><Mini><path d="M0 4h18M0 14h18M0 7h18M0 17h18M2 10h5M11 10h5" stroke="#6d7178" strokeWidth="1.500" /></Mini></Cell>
        <Cell w="w-2"><Caret /></Cell>
        <button type="button" className="flex h-[22px] w-9 items-center justify-between border border-[#f0c888] bg-linear-to-b from-[#ffd9a0] via-[#ffb45a] to-[#ffe79a] px-[3px]">
            <svg viewBox="0 0 20 18" className="h-[18px] w-5"><text x="1" y="10" fontSize="12" fontWeight="bold" fill="#1670d8">IP.</text><path d="M9 10v6q2 2 3 0v-6" stroke="#777" strokeWidth="2" fill="#fff" /></svg>
            <Caret />
        </button>
        <Cell w="w-6">
            <Mini>
                <g fill="none" strokeWidth="1.500"><path d="M0 1l4 4 4-4 4 4 5-4" stroke="#33d" /><path d="M0 5l4 4 4-4 4 4 5-4M0 9l4 4 4-4 4 4 5-4" stroke="#e33" /><path d="M0 13l4 4 4-4 4 4 5-4" stroke="#33d" /></g>
            </Mini>
        </Cell>
        <Cell w="w-2"><Caret /></Cell>
        <Cell w="w-[22px]"><Mini><path d="M1 6h10v11H1z" fill="#cfc5c9" stroke="#22d" strokeWidth="1.500" /><path d="M1 6l5-5h11l-6 5z" fill="#6a5440" stroke="#22d" /><path d="M11 6l6-5v11l-6 5z" fill="#f5e5b8" stroke="#22d" strokeWidth="1.500" /></Mini></Cell>
        <Cell w="w-2"><Caret /></Cell>
        <Cell w="w-6"><Mini><path d="M1 6l6-5h10v10l-5 6H1z" fill="#a9ccf8" stroke="#5f97e6" /><path d="M1 6h11v11M12 6l5-5M7 1v10l-6 6M7 11h10" stroke="#fff" fill="none" /></Mini></Cell>
        <Cell w="w-2"><Caret /></Cell>
        <Cell w="w-[22px]"><Mini><circle cx="9" cy="9" r="7.500" fill="#d8dade" stroke="#77797f" strokeWidth="1.500" /><path d="M2 8q7 4 14 0M9 1q-5 8 0 16M9 1l6 10" stroke="#33c" fill="none" /><path d="M11 11h6v6h-6z" fill="#e8c41a" /></Mini></Cell>
        <Cell w="w-2"><Sep /></Cell>
        <svg viewBox="0 0 20 18" className="h-[18px] w-5"><text x="10" y="9" textAnchor="middle" fontSize="9" fontWeight="bold" fill="#333">0.00</text><path d="M0 14h20" stroke="#fe0" strokeWidth="5" /><path d="M0 12h20" stroke="#11c" strokeWidth="2" /><path d="M1 14h19" stroke="#11c" strokeWidth="2" strokeDasharray="1 2" /></svg>
        <Cell w="w-2"><Caret /></Cell>
        <svg viewBox="0 0 20 18" className="h-[18px] w-5"><path d="M1 2h17v13H1z" fill="#555" stroke="#333" /><path d="M2 4h15M2 13h15" stroke="#fe3" strokeWidth="1.500" strokeDasharray="1 1" /><path d="M5 6h8v5H5z" fill="#f6e23a" /><path d="M12 8q4-3 6 1l-1 5h-3z" fill="#fbe9b0" stroke="#b8860b" /></svg>
    </div>
);

const cad = "font-['DejaVu_Sans_Light','DejaVu_Sans',sans-serif] font-extralight";

const Dialog = () => {
    const [fit, setFit] = useState(true);

    return (
        <div role="dialog" aria-label="折れ点区間自動作成" className="absolute top-[151px] left-[503px] flex h-[750px] w-[920px] flex-col overflow-hidden rounded-lg border border-[#8d8d8d] bg-white text-[13px] shadow-lg">
            <div className="flex h-[34px] shrink-0 items-center bg-[#f2f2f2] pl-[9px]">
                <svg viewBox="0 0 18 14" className="h-[14px] w-[18px]">
                    <rect x=".5" y=".5" width="17" height="13" fill="#fff" stroke="#999" />
                    <path d="M2 2h8v10H2z" fill="#2f7f78" /><path d="M2 2h4v10H2z" fill="#3c5c9c" opacity=".5" /><path d="M14 3h2v5h-2z" fill="#6a9" />
                </svg>
                <h1 className="ml-2 text-xs leading-[18px]">折れ点区間自動作成</h1>
                <div className="mr-5 ml-auto flex items-center gap-[39px]">
                    <button type="button" disabled aria-label="最小化"><svg viewBox="0 0 14 14" className="h-[14px] w-[14px]" stroke="#c9c9c9"><path d="M1 7.500h11" /></svg></button>
                    <button type="button" aria-label="最大化"><svg viewBox="0 0 14 14" className="h-[14px] w-[14px]" stroke="#222" fill="none" strokeWidth="1.300"><rect x="2" y="2" width="10" height="10" rx="1" /></svg></button>
                    <button type="button" aria-label="閉じる"><svg viewBox="0 0 14 14" className="h-[14px] w-[14px]" stroke="#222" strokeWidth="1.300"><path d="M1 1l12 12M13 1L1 13" /></svg></button>
                </div>
            </div>
            <div className="flex min-h-0 flex-1 flex-col pt-3 shadow-[inset_0_0_13px_3px_#dadada]">
                <div className="flex">
                    <div className="w-[376px] pl-[13px]">
                        <label className="flex items-center">
                            <span className="w-[71px] text-sm leading-[18px] whitespace-nowrap">平面線形:</span>
                            <input readOnly defaultValue="新規路線1" className={`${field} min-w-0 flex-1 bg-[#f0f0f0] text-[13px]`} />
                        </label>
                        <label className="mt-1 flex items-center">
                            <span className="w-[71px] text-[13px] leading-[18px] whitespace-nowrap">横断セット:</span>
                            <input readOnly defaultValue="新規路線1" className={`${field} min-w-0 flex-1 bg-[#f0f0f0] text-[13px]`} />
                        </label>
                        <div className="mt-[14px] h-[118px] border border-[#e2e2e2] pt-2 pl-[67px]">
                            <div className="flex gap-1">
                                <button type="button" aria-label="前の点" className="h-6 w-7 bg-[#ededed]"><svg viewBox="0 0 28 24" className="h-6 w-7" fill="#666"><path d="M20 1v22L2 12zM22 1h3v22h-3z" /></svg></button>
                                <BoxSelect label="点" value="◯ C1 (1/2)" className="w-[149px]" />
                                <button type="button" aria-label="次の点" className="h-6 w-7 bg-[#ededed]"><svg viewBox="0 0 28 24" className="h-6 w-7" fill="#0a18cc"><path d="M7 1v22l18-11zM2 1h3v22H2z" /></svg></button>
                            </div>
                            <label className="mt-[5px] flex items-center">
                                <span className="w-[54px] text-sm">測点名</span>
                                <input readOnly defaultValue="NO.0+5.869" className={`${field} w-[158px] bg-[#f0f0f0] text-xs`} />
                            </label>
                            <label className="mt-2 flex items-center gap-[2px] text-[13px] leading-[18px] whitespace-nowrap">
                                <input type="checkbox" checked={fit} onChange={(e) => setFit(e.target.checked)} className="h-[15px] w-[15px] accent-[#0a5eb8]" />
                                計画断面を交角に合わせて補正
                            </label>
                            <p className="mt-1 pl-4 leading-[18px] whitespace-nowrap">※前後断面が同じ場合に補正</p>
                        </div>
                        <fieldset className="mt-[14px] h-[135px] border border-[#e2e2e2] pl-[44px]">
                            <legend className="-ml-[37px] px-[3px] text-[13px] leading-4">前後の断面距離</legend>
                            <div className="grid grid-cols-[149px_1fr] pt-[6px]">
                                {[['前', 'NO.0+4.869'], ['後', 'NO.0+6.869']].map(([name, point]) => (
                                    <div key={name} className="flex flex-col">
                                        <label className="flex flex-col">
                                            <span className="w-[95px] text-center leading-4">{name}</span>
                                            <span className="mt-[6px] flex items-end gap-[6px]">
                                                <input defaultValue="1.000" className={`${field} w-[95px] bg-white text-right text-xs`} />
                                                m
                                            </span>
                                        </label>
                                        <p className="mt-[6px] h-4 text-xs leading-4 whitespace-nowrap">{name === '後' && '※作成しない場合は0.000m'}</p>
                                        <input readOnly aria-label={`${name}の測点`} defaultValue={point} className={`${field} mt-2 w-[95px] bg-[#f0f0f0] text-xs`} />
                                    </div>
                                ))}
                            </div>
                        </fieldset>
                        <fieldset className="mt-[14px] h-[303px] min-w-0 border border-[#e2e2e2] pr-[18px] pl-[15px]">
                            <legend className="-ml-2 px-[3px] text-[13px] leading-4">複写元</legend>
                            <div className="pt-[6px]"><BoxSelect label="複写元" value="NO.0" className="w-[143px]" /></div>
                            <div className="mt-[7px] flex h-[26px] items-center gap-2 bg-[#f0f0f0] pl-[5px]">
                                <button type="button" aria-label="適用"><Mini><path d="M0 8l3-2 4 5L16 1l2 1L7 17z" fill="#555" /></Mini></button>
                                <button type="button" aria-label="削除"><Mini><path d="M0 1l4-1 5 6 7-6 2 1-7 7 7 9-2 1-7-8-6 8-3-1 6-9z" fill="#f01010" /></Mini></button>
                                <span className="h-[22px] w-px bg-[#aaa]"></span>
                                <button type="button" aria-label="線"><Mini><path d="M0 15h18" stroke="#fe0" strokeWidth="5" /><path d="M0 13.500h18" stroke="#11c" strokeWidth="1.500" /><path d="M1 15h17" stroke="#11c" strokeWidth="2" strokeDasharray="1 2" /><path d="M2 9l14-7" stroke="#33e" /><circle cx="2" cy="9" r="1.500" fill="#f11" /><circle cx="16" cy="2" r="1.500" fill="#f11" /></Mini></button>
                                <button type="button" aria-label="面"><Mini><path d="M2 12V7l14-6v11z" fill="#a9e6ea" stroke="#888" /><path d="M0 15h18" stroke="#fe0" strokeWidth="5" /><path d="M0 13.500h18" stroke="#11c" strokeWidth="1.500" /><path d="M1 15h17" stroke="#11c" strokeWidth="2" strokeDasharray="1 2" /></Mini></button>
                                <span className="h-[22px] w-px bg-[#aaa]"></span>
                                <button type="button" aria-label="ページ"><Mini><Page x={2} y={1} w={14} h={16} /><path d="M4 15l3-5h8v5z" fill="#e8b9a8" stroke="#c88" strokeWidth=".5" /></Mini></button>
                            </div>
                            <div className="relative flex h-[206px] flex-col items-center bg-black pt-6 font-['Liberation_Mono','Noto_Sans_CJK_JP',monospace] text-[17px] leading-[26px] text-[#ececec]">
                                <p className="flex h-[26px] items-center whitespace-pre">NO.0 [BP]</p>
                                <p className="flex h-[26px] items-center">FH=100.000</p>
                                <p className="flex h-[26px] items-center text-xl">計画層</p>
                                <p className="flex h-[26px] items-center">3D<span className="text-xl">施<b>工</b></span></p>
                                <p className="flex h-[26px] items-center">CL</p>
                                <svg viewBox="0 0 12 12" className="absolute top-[98px] left-[158px] h-3 w-3" fill="none" stroke="#c9bd1a" strokeWidth="1.500"><circle cx="6" cy="6" r="5" /><circle cx="6" cy="6" r="2" stroke="#ddd" /></svg>
                            </div>
                        </fieldset>
                    </div>
                    <div className="mr-[2px] ml-[3px] h-[649px] w-[6px] border-r-2 border-l border-[#9a9a9a] bg-[#ececec]"></div>
                    <div className="mr-[14px] min-w-0 flex-1 pt-[2px]">
                        <ViewToolbar />
                        <svg className={`mt-[3px] h-[619px] w-full bg-black ${cad}`} fontSize="22">
                            <path d="M48 151l31 116L321 402l137-38" fill="none" stroke="#e8e8e8" />
                            <text x="46" y="151" fill="#e0e0e0">NO.0</text>
                            <text x="78" y="267" fill="#d01010" fontSize="32">NO.0+5.869</text>
                            <text x="73" y="248" fill="#1c7cf0">NO.0+4.869</text>
                            <text x="96" y="278" fill="#1c7cf0">NO.0+6.869</text>
                            <text x="319" y="403" fill="#e0e0e0">NO.0+19.330</text>
                            <text x="457" y="364" fill="#e0e0e0">NO.0+20.000</text>
                        </svg>
                    </div>
                </div>
                <div className="mt-[14px] mr-[14px] flex justify-end gap-1">
                    <button type="button" className="flex h-6 w-[101px] items-center border border-[#f7cb7d] bg-linear-to-b from-[#ffe866] to-[#ffc861]">
                        <svg viewBox="0 0 20 20" className="h-[19px] w-5"><path d="M1 10l3-2 3 5L17 1l2 1L7 19z" fill="#16e016" stroke="#4a7a3a" strokeWidth=".7" /></svg>
                        <span className="flex-1 pr-5 pl-4 text-[13px]">OK</span>
                    </button>
                    <button type="button" className="flex h-6 w-[101px] items-center border border-[#ececec] bg-linear-to-b from-[#f6f6f6] to-[#e6e6e6]">
                        <svg viewBox="0 0 20 20" className="h-[19px] w-5"><path d="M1 2l3-1 6 7 7-7 2 1-7 8 7 9-2 1-7-8-6 8-3-1 7-9z" fill="#e81010" /></svg>
                        <span className="flex-1 text-xs whitespace-nowrap">キャンセル</span>
                    </button>
                </div>
            </div>
        </div>
    );
};

const App = () => (
    <div className="relative flex h-screen flex-col overflow-hidden bg-[#f0f0f0] font-['Liberation_Sans','Noto_Sans_CJK_JP',sans-serif] text-black">
        <Ribbon />
        <div className="flex min-h-0 flex-1">
            <InputPanel />
            <DrawingPane />
        </div>
        <Dialog />
    </div>
);

export default App;
